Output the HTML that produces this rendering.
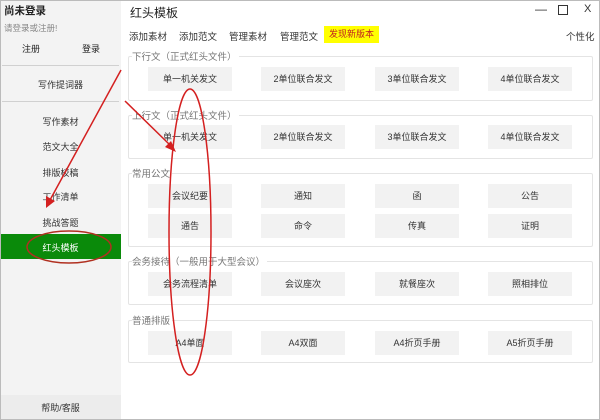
<!DOCTYPE html>
<html><head><meta charset="utf-8"><style>
*{margin:0;padding:0;box-sizing:border-box}
body{width:600px;height:420px;overflow:hidden;position:relative;background:#fff;font-family:"Liberation Sans","Noto Sans CJK SC",sans-serif;color:#222}
.a{position:absolute;white-space:nowrap}
#side{position:absolute;left:0;top:0;width:121px;height:420px;background:#f3f3f3}
.hl{position:absolute;left:2px;width:117px;height:1px;background:#d0d0d0}
.si{position:absolute;left:0;width:121px;text-align:center;font-size:9px;color:#333}
.box{position:absolute;left:128px;width:465px;border:1px solid #e4e4e4;border-radius:2px}
.lbl{position:absolute;left:132px;font-size:9.5px;color:#777;background:#fff;padding-right:2px}
.b{position:absolute;width:84px;height:24px;background:#f2f2f2;font-size:9px;line-height:24px;text-align:center;color:#333}
.m{position:absolute;top:29px;font-size:9.5px;color:#333}
</style></head><body>
<div style="position:absolute;inset:0;border:1px solid #bbb;z-index:5;pointer-events:none"></div>
<div id="side">
<div class="a" style="left:4px;top:3px;font-size:10.5px;font-weight:bold;color:#222">尚未登录</div>
<div class="a" style="left:4px;top:22px;font-size:8.5px;color:#888">请登录或注册!</div>
<div class="a" style="left:22px;top:42px;font-size:9px">注册</div>
<div class="a" style="left:82px;top:42px;font-size:9px">登录</div>
<div class="hl" style="top:65px"></div>
<div class="si" style="top:78px">写作提词器</div>
<div class="hl" style="top:101px"></div>
<div class="si" style="top:115px">写作素材</div>
<div class="si" style="top:140px">范文大全</div>
<div class="si" style="top:166px">排版校稿</div>
<div class="si" style="top:190px">工作清单</div>
<div class="si" style="top:216px">挑战答题</div>
<div style="position:absolute;left:1px;top:234px;width:120px;height:25px;background:#0a8a0a"></div>
<div class="si" style="top:241px;color:#fff">红头模板</div>
<div style="position:absolute;left:0;top:395px;width:121px;height:24px;background:#ececec"></div>
<div class="si" style="top:401px">帮助/客服</div>
</div>
<div class="a" style="left:130px;top:4px;font-size:12px;color:#222">红头模板</div>
<div class="a" style="left:535px;top:2px;font-size:12px;color:#333">—</div>
<div class="a" style="left:258px;top:0;display:none"></div>
<div class="a" style="left:558px;top:5px;width:10px;height:10px;border:1.5px solid #333"></div>
<div class="a" style="left:584px;top:3px;font-size:11px;color:#333">X</div>
<div class="m" style="left:129px">添加素材</div>
<div class="m" style="left:179px">添加范文</div>
<div class="m" style="left:229px">管理素材</div>
<div class="m" style="left:280px">管理范文</div>
<div class="a" style="left:324px;top:26px;width:55px;height:17px;background:#ffff00;font-size:9px;color:#c02020;text-align:center;line-height:17px">发现新版本</div>
<div class="m" style="left:566px">个性化</div>

<div class="box" style="top:56px;height:45px"></div><div class="lbl" style="top:49px">下行文（正式红头文件）</div>
<div class="box" style="top:115px;height:44px"></div><div class="lbl" style="top:108px">上行文（正式红头文件）</div>
<div class="box" style="top:173px;height:74px"></div><div class="lbl" style="top:166px">常用公文</div>
<div class="box" style="top:261px;height:44px"></div><div class="lbl" style="top:254px">会务接待（一般用于大型会议）</div>
<div class="box" style="top:320px;height:43px"></div><div class="lbl" style="top:313px">普通排版</div>

<div class="b" style="left:148px;top:67px">单一机关发文</div><div class="b" style="left:261px;top:67px">2单位联合发文</div><div class="b" style="left:375px;top:67px">3单位联合发文</div><div class="b" style="left:488px;top:67px">4单位联合发文</div>
<div class="b" style="left:148px;top:125px">单一机关发文</div><div class="b" style="left:261px;top:125px">2单位联合发文</div><div class="b" style="left:375px;top:125px">3单位联合发文</div><div class="b" style="left:488px;top:125px">4单位联合发文</div>
<div class="b" style="left:148px;top:184px">会议纪要</div><div class="b" style="left:261px;top:184px">通知</div><div class="b" style="left:375px;top:184px">函</div><div class="b" style="left:488px;top:184px">公告</div>
<div class="b" style="left:148px;top:214px">通告</div><div class="b" style="left:261px;top:214px">命令</div><div class="b" style="left:375px;top:214px">传真</div><div class="b" style="left:488px;top:214px">证明</div>
<div class="b" style="left:148px;top:272px">会务流程清单</div><div class="b" style="left:261px;top:272px">会议座次</div><div class="b" style="left:375px;top:272px">就餐座次</div><div class="b" style="left:488px;top:272px">照相排位</div>
<div class="b" style="left:148px;top:331px">A4单面</div><div class="b" style="left:261px;top:331px">A4双面</div><div class="b" style="left:375px;top:331px">A4折页手册</div><div class="b" style="left:488px;top:331px">A5折页手册</div>

<svg style="position:absolute;left:0;top:0" width="600" height="420">
<g stroke="#d42020" stroke-width="1.5" fill="none">
<line x1="121" y1="70" x2="50" y2="200"/>
<line x1="125" y1="101" x2="170" y2="145"/>
<ellipse cx="190" cy="232" rx="21" ry="143"/>
<ellipse cx="69" cy="247" rx="42" ry="16" stroke="#b03020"/>
</g>
<polygon points="46,208 46,196 55,201" fill="#d42020"/>
<polygon points="176,152 165,147 171,141" fill="#d42020"/>
</svg>
</body></html>
